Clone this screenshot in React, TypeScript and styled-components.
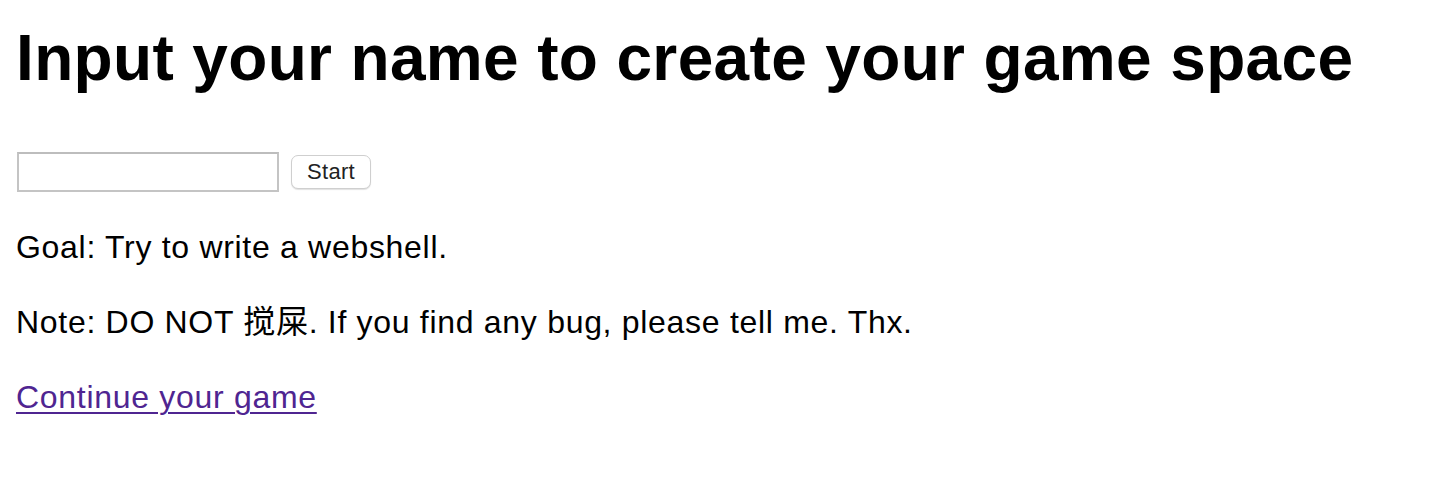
import React from "react";
import styled, { createGlobalStyle } from "styled-components";

const Global = createGlobalStyle`
  html, body { margin: 0; padding: 0; background: #fff; }
  body {
    font-family: "Liberation Sans", Arial, "Noto Sans CJK SC", sans-serif;
    color: #000;
  }
`;

const Page = styled.div`
  padding: 21px 16px 0 16px;
`;

const Title = styled.h1`
  margin: 0 0 56px 0;
  font-size: 64px;
  line-height: 74px;
  letter-spacing: 0.35px;
  font-weight: 700;
  white-space: nowrap;
`;

const Form = styled.form`
  display: flex;
  align-items: center;
  gap: 12px;
  margin: 0 0 34px 1px;
  height: 41px;
`;

const NameInput = styled.input`
  box-sizing: border-box;
  width: 262px;
  height: 40px;
  border: 2px solid #c4c4c4;
  border-top-color: #bdbdbd;
  background: #fff;
  padding: 2px 4px;
  font-size: 22px;
  outline: none;
`;

const StartButton = styled.button`
  box-sizing: border-box;
  width: 80px;
  height: 34px;
  margin-top: 1px;
  border: 1px solid #cfcfcf;
  border-radius: 7px;
  background: #fff;
  box-shadow: 0 1px 1px rgba(0, 0, 0, 0.12);
  font-family: "Liberation Sans", Arial, sans-serif;
  font-size: 22px;
  letter-spacing: 0.3px;
  color: #222;
  padding: 0;
`;

const Para = styled.p`
  margin: 0 0 32px 0;
  font-size: 32px;
  line-height: 43px;
  letter-spacing: 0.7px;
`;

const GameLink = styled.a`
  color: #4f2591;
  text-decoration: underline;
  text-underline-offset: 4px;
  text-decoration-thickness: 2px;
`;

export default function App() {
  return (
    <>
      <Global />
      <Page>
        <Title>Input your name to create your game space</Title>
        <Form onSubmit={(e) => e.preventDefault()}>
          <NameInput type="text" />
          <StartButton type="submit">Start</StartButton>
        </Form>
        <Para>Goal: Try to write a webshell.</Para>
        <Para>Note: DO NOT 搅屎. If you find any bug, please tell me. Thx.</Para>
        <Para>
          <GameLink href="#">Continue your game</GameLink>
        </Para>
      </Page>
    </>
  );
}
